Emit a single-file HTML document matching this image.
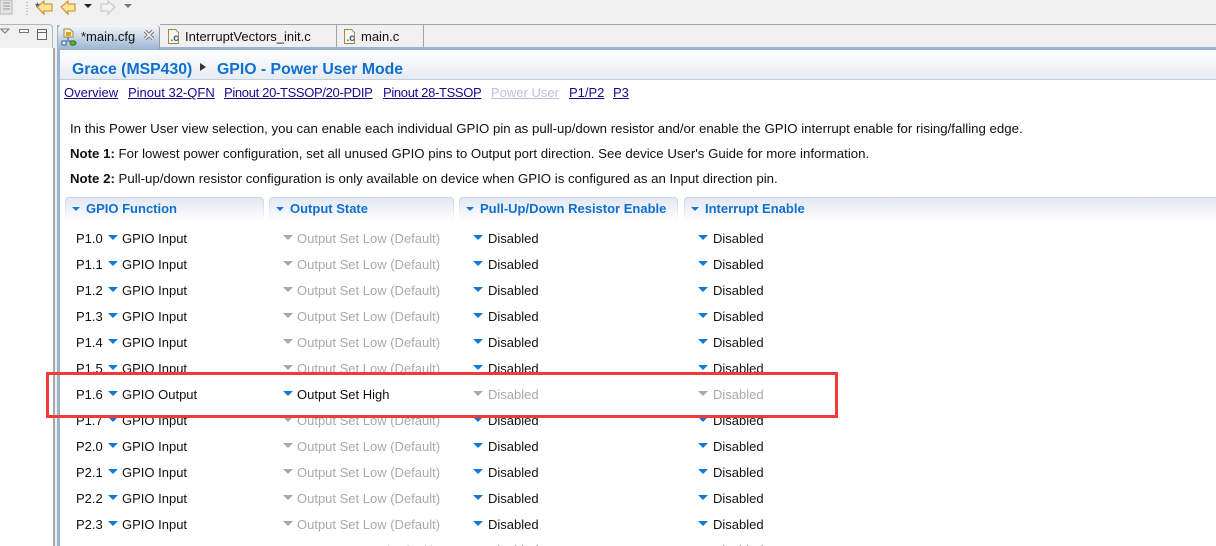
<!DOCTYPE html>
<html><head><meta charset="utf-8"><style>
html,body{margin:0;padding:0;width:1216px;height:546px;overflow:hidden;background:#fff}
#w{position:absolute;left:0;top:0;width:1216px;height:546px;overflow:hidden;background:#fff;font-family:"Liberation Sans",sans-serif;font-size:13px;color:#111}
.a{position:absolute;white-space:nowrap}
.l{position:absolute;top:84px;line-height:17px;color:#1a0a8c;text-decoration:underline;white-space:nowrap;font-size:13px}
.p{position:absolute;left:70px;line-height:20px;white-space:nowrap;font-size:13.240px}
.h{position:absolute;top:197px;height:25px;border-radius:4px 4px 0 0;background:linear-gradient(#c6d3e2,#fff)}
.h::before{content:"";position:absolute;left:1px;right:1px;top:1px;bottom:0;border-radius:3px 3px 0 0;background:linear-gradient(#e3e8f1,#fff)}
.h span{position:absolute;top:2px;line-height:20px;color:#0f70cf;font-weight:bold;font-size:13px;white-space:nowrap}
.h i{position:absolute;top:10px;left:7px;border:4px solid transparent;border-top:4px solid #0f79d6;border-bottom:0}
.r{position:absolute;left:0;width:1000px;height:26px;line-height:26px;font-size:13px}
.r b{font-weight:normal;position:absolute;white-space:nowrap}
.r i{position:absolute;top:9px;border:5px solid transparent;border-top:5.500px solid #0f79d6;border-bottom:0}
.r i.g{border-top-color:#a8a8a8}
.r b.g{color:#a9a9a9}
.c0{left:76px}.t1{left:108px}.c1{left:122px}.t2{left:283px}.c2{left:297px}.t3{left:473px}.c3{left:488px}.t4{left:698px}.c4{left:713px}
</style></head><body><div id="w">

<div class="a" style="left:0;top:0;width:1216px;height:48px;background:#f0f0f0"></div>
<div class="a" style="left:160px;top:24px;width:1056px;height:1px;background:#a3a3a3"></div>

<svg class="a" style="left:0;top:0" width="170" height="24">
<rect x="0" y="0" width="12" height="14" fill="#e4e4e4" stroke="#b5b5b5"/>
<path d="M3 3h7M3 6h7M3 9h7" stroke="#9a9a9a"/>
<path d="M27 2v1M27 5v1M27 8v1M27 11v1M27 14v1" stroke="#b5b5b5" stroke-width="1.5"/>
<path d="M37 7l7-6v3h8v7h-8v3z" fill="#fbe39a" stroke="#c48a1a"/>
<text x="35" y="11" font-size="12" fill="#113a80" font-family="Liberation Sans">*</text>
<path d="M61 7l7-6v3h7v7h-7v3z" fill="#fbe39a" stroke="#c48a1a"/>
<path d="M84 4h8l-4 4z" fill="#222"/>
<path d="M115 7l-7-6v3h-7v7h7v3z" fill="#f2f2f2" stroke="#c4c4c4"/>
<path d="M124 4h8l-4 4z" fill="#777"/>
</svg>

<!-- left panel -->
<div class="a" style="left:0;top:24px;width:53px;height:24px;border-right:1px solid #b5b5b5;border-top:1px solid #b5b5b5;border-radius:0 4px 0 0;box-sizing:border-box"></div>
<div class="a" style="left:0;top:48px;width:53px;height:498px;background:#fff"></div>
<svg class="a" style="left:0;top:26px" width="53" height="20">
<path d="M1 3h8l-4 4z" fill="#f5f5f5" stroke="#777"/>
<rect x="19.500" y="3.500" width="9" height="3" fill="#f5f5f5" stroke="#777"/>
<rect x="37.500" y="3.500" width="9" height="10" fill="#f5f5f5" stroke="#666"/>
<path d="M37 6.500h10" stroke="#666"/>
</svg>
<div class="a" style="left:53px;top:48px;width:2px;height:498px;background:#a9a9a9"></div>
<div class="a" style="left:55px;top:48px;width:2px;height:498px;background:#f0f0f0"></div>

<!-- editor frame -->
<div class="a" style="left:57px;top:25px;width:3px;height:521px;background:#9ab3ce"></div>
<div class="a" style="left:57px;top:47px;width:1159px;height:3px;background:#9ab3ce"></div>

<!-- tabs -->
<div class="a" style="left:58px;top:25px;width:102px;height:24px;background:linear-gradient(#f6f8fb,#9db6d2);border-radius:4px 4px 0 0;border-right:1px solid #9a9a9a;box-sizing:border-box"></div>
<div class="a" style="left:336px;top:25px;width:1px;height:22px;background:#a3a3a3"></div>
<div class="a" style="left:423px;top:25px;width:1px;height:22px;background:#a3a3a3"></div>
<svg class="a" style="left:60px;top:26px" width="300" height="22">
<path d="M4 3h6l3 3v5H4z" fill="#fbf3d0" stroke="#9c8a50"/>
<rect x="6" y="6" width="5" height="4" fill="#d9a62a"/>
<path d="M8 11v3M4 15h9" stroke="#3a5f96"/>
<rect x="2" y="15" width="4" height="4" fill="#e8f0f8" stroke="#3a5f96"/>
<ellipse cx="13" cy="17" rx="3" ry="2.300" fill="#5aaa3a" stroke="#2d7a20"/>
<path d="M85 5l8 8M93 5l-8 8" stroke="#777" stroke-width="3.500"/>
<path d="M85 5l8 8M93 5l-8 8" stroke="#fff" stroke-width="1.500"/>
<path d="M108.500 3.500h7l3 3v11h-10z" fill="#fbf8ea" stroke="#9c8a50"/>
<text x="110.500" y="15" font-size="10" fill="#2a5a9a" font-family="Liberation Sans" font-weight="bold">.c</text>
<path d="M284.500 3.500h7l3 3v11h-10z" fill="#fbf8ea" stroke="#9c8a50"/>
<text x="286.500" y="15" font-size="10" fill="#2a5a9a" font-family="Liberation Sans" font-weight="bold">.c</text>
</svg>
<div class="a" style="left:81px;top:28px;line-height:17px;font-size:13px">*main.cfg</div>
<div class="a" style="left:185px;top:28px;line-height:17px;font-size:13px">InterruptVectors_init.c</div>
<div class="a" style="left:361px;top:28px;line-height:17px;font-size:13px">main.c</div>

<!-- header -->
<div class="a" style="left:60px;top:50px;width:1156px;height:29px;background:linear-gradient(#fff,#e6ebf3)"></div>
<div class="a" style="left:60px;top:79px;width:1156px;height:1px;background:#c1cfdc"></div>
<div class="a" style="left:72px;top:59px;line-height:22px;font-size:15.8px;font-weight:bold;color:#0f70cf">Grace (MSP430)</div>
<div class="a" style="left:200px;top:63px;border:4.500px solid transparent;border-left:6px solid #333;border-right:0"></div>
<div class="a" style="left:217px;top:59px;line-height:22px;font-size:15.8px;font-weight:bold;color:#0f70cf">GPIO - Power User Mode</div>

<span class="l" style="left:64px">Overview</span>
<span class="l" style="left:128px">Pinout 32-QFN</span>
<span class="l" style="left:224px;letter-spacing:-.33px">Pinout 20-TSSOP/20-PDIP</span>
<span class="l" style="left:383px;letter-spacing:-.33px">Pinout 28-TSSOP</span>
<span class="l" style="left:491px;color:#c4bce0">Power User</span>
<span class="l" style="left:569px">P1/P2</span>
<span class="l" style="left:613px">P3</span>

<div class="p" style="top:119px">In this Power User view selection, you can enable each individual GPIO pin as pull-up/down resistor and/or enable the GPIO interrupt enable for rising/falling edge.</div>
<div class="p" style="top:144px"><strong>Note 1:</strong> For lowest power configuration, set all unused GPIO pins to Output port direction. See device User's Guide for more information.</div>
<div class="p" style="top:169px"><strong>Note 2:</strong> Pull-up/down resistor configuration is only available on device when GPIO is configured as an Input direction pin.</div>

<div class="h" style="left:65px;width:199px"><i></i><span style="left:21px">GPIO Function</span></div>
<div class="h" style="left:269px;width:185px"><i></i><span style="left:21px">Output State</span></div>
<div class="h" style="left:459px;width:219px"><i></i><span style="left:21px">Pull-Up/Down Resistor Enable</span></div>
<div class="h" style="left:684px;width:540px"><i></i><span style="left:21px">Interrupt Enable</span></div>

<div class="r" style="top:226px"><b class="c0">P1.0</b><i class="t1"></i><b class="c1">GPIO Input</b><i class="t2 g"></i><b class="c2 g">Output Set Low (Default)</b><i class="t3"></i><b class="c3">Disabled</b><i class="t4"></i><b class="c4">Disabled</b></div>
<div class="r" style="top:252px"><b class="c0">P1.1</b><i class="t1"></i><b class="c1">GPIO Input</b><i class="t2 g"></i><b class="c2 g">Output Set Low (Default)</b><i class="t3"></i><b class="c3">Disabled</b><i class="t4"></i><b class="c4">Disabled</b></div>
<div class="r" style="top:278px"><b class="c0">P1.2</b><i class="t1"></i><b class="c1">GPIO Input</b><i class="t2 g"></i><b class="c2 g">Output Set Low (Default)</b><i class="t3"></i><b class="c3">Disabled</b><i class="t4"></i><b class="c4">Disabled</b></div>
<div class="r" style="top:304px"><b class="c0">P1.3</b><i class="t1"></i><b class="c1">GPIO Input</b><i class="t2 g"></i><b class="c2 g">Output Set Low (Default)</b><i class="t3"></i><b class="c3">Disabled</b><i class="t4"></i><b class="c4">Disabled</b></div>
<div class="r" style="top:330px"><b class="c0">P1.4</b><i class="t1"></i><b class="c1">GPIO Input</b><i class="t2 g"></i><b class="c2 g">Output Set Low (Default)</b><i class="t3"></i><b class="c3">Disabled</b><i class="t4"></i><b class="c4">Disabled</b></div>
<div class="r" style="top:356px"><b class="c0">P1.5</b><i class="t1"></i><b class="c1">GPIO Input</b><i class="t2 g"></i><b class="c2 g">Output Set Low (Default)</b><i class="t3"></i><b class="c3">Disabled</b><i class="t4"></i><b class="c4">Disabled</b></div>
<div class="r" style="top:408px"><b class="c0">P1.7</b><i class="t1"></i><b class="c1">GPIO Input</b><i class="t2 g"></i><b class="c2 g">Output Set Low (Default)</b><i class="t3"></i><b class="c3">Disabled</b><i class="t4"></i><b class="c4">Disabled</b></div>
<div class="r" style="top:434px"><b class="c0">P2.0</b><i class="t1"></i><b class="c1">GPIO Input</b><i class="t2 g"></i><b class="c2 g">Output Set Low (Default)</b><i class="t3"></i><b class="c3">Disabled</b><i class="t4"></i><b class="c4">Disabled</b></div>
<div class="r" style="top:460px"><b class="c0">P2.1</b><i class="t1"></i><b class="c1">GPIO Input</b><i class="t2 g"></i><b class="c2 g">Output Set Low (Default)</b><i class="t3"></i><b class="c3">Disabled</b><i class="t4"></i><b class="c4">Disabled</b></div>
<div class="r" style="top:486px"><b class="c0">P2.2</b><i class="t1"></i><b class="c1">GPIO Input</b><i class="t2 g"></i><b class="c2 g">Output Set Low (Default)</b><i class="t3"></i><b class="c3">Disabled</b><i class="t4"></i><b class="c4">Disabled</b></div>
<div class="r" style="top:512px"><b class="c0">P2.3</b><i class="t1"></i><b class="c1">GPIO Input</b><i class="t2 g"></i><b class="c2 g">Output Set Low (Default)</b><i class="t3"></i><b class="c3">Disabled</b><i class="t4"></i><b class="c4">Disabled</b></div>
<div class="r" style="top:538px"><b class="c2 g" style="left:385px">(Default)</b><b class="c3">Disabled</b><b class="c4">Disabled</b></div>

<!-- red highlight -->
<div class="a" style="left:60px;top:375px;width:775px;height:40px;background:#fff"></div>
<div class="r" style="top:382px"><b class="c0">P1.6</b><i class="t1"></i><b class="c1">GPIO Output</b><i class="t2"></i><b class="c2">Output Set High</b><i class="t3 g"></i><b class="c3 g">Disabled</b><i class="t4 g"></i><b class="c4 g">Disabled</b></div>
<div class="a" style="left:46px;top:372px;width:792px;height:46px;box-sizing:border-box;border:3px solid #f33a3a"></div>
</div></body></html>
